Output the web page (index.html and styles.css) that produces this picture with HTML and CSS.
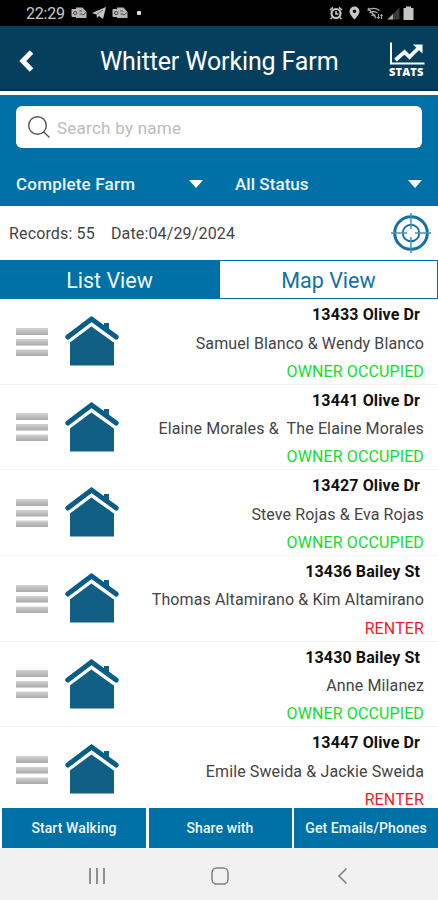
FILE: index.html
```html
<!DOCTYPE html>
<html lang="en">
<head>
    <meta charset="UTF-8">
    <title>Whitter Working Farm</title>
    <link rel="stylesheet" href="styles.css">
</head>
<body>
    <!-- shared icons -->
    <svg class="defs" width="0" height="0">
        <defs>
            <linearGradient id="bar" x1="0" y1="0" x2="0" y2="1">
                <stop offset="0" stop-color="#d2d2d2"/>
                <stop offset="1" stop-color="#aaaaaa"/>
            </linearGradient>
            <symbol id="menu" viewBox="0 0 34 30">
                <rect x="1" y="1" width="32" height="7" fill="url(#bar)"/>
                <rect x="1" y="12" width="32" height="6.5" fill="url(#bar)"/>
                <rect x="1" y="22.500" width="32" height="6.500" fill="url(#bar)"/>
            </symbol>
            <symbol id="house" viewBox="0 0 54 52">
                <path d="M5 24.500 L26.500 9 L49 25 V50.500 H5 Z" fill="#125f86"/>
                <path d="M39 8 H44 V17 L39 13 Z" fill="#125f86"/>
                <path d="M3 26.500 L26.500 9 L51 26.500" fill="none" stroke="#fff" stroke-width="4"/>
                <path d="M2.800 22 L26.500 4 L51.200 22" fill="none" stroke="#075c88" stroke-width="5" stroke-linecap="round"/>
            </symbol>
            <symbol id="mail" viewBox="0 0 16 12">
                <path d="M5 0.500 H11.500 L15.500 5 V11 H5 Z" fill="#b4b4b4"/>
                <rect x="0.500" y="2" width="7.500" height="8" rx="1" fill="#bbb"/>
                <circle cx="4.200" cy="6" r="1.700" fill="none" stroke="#444"/>
                <path d="M8.500 4 H11 M8.500 7 H10.500 L12 8 L15 5.500" fill="none" stroke="#444" stroke-width="0.900"/>
            </symbol>
        </defs>
    </svg>

    <div class="status-bar">
        <span class="time">22:29</span>
        <svg class="s-mail" width="16" height="12"><use href="#mail"/></svg>
        <svg class="s-plane" width="14" height="12" viewBox="0 0 14 12"><path d="M0 6 L14 0 L11 12 L7 9 L5 11 L4.500 7.500 Z" fill="#c4c4c4"/><path d="M4.500 7.500 L11 3" stroke="#444" stroke-width="0.700"/></svg>
        <svg class="s-mail" width="16" height="12"><use href="#mail"/></svg>
        <span class="dot"></span>
        <div class="system">
            <svg class="alarm" width="14" height="14" viewBox="0 0 14 14" fill="none" stroke="#c4c4c4"><circle cx="7" cy="7.500" r="4.500" stroke-width="2.200"/><path d="M7 5 V8 H9.500 M1 4 L4 1.300 M10 1.300 L13 4 M3 11.500 L1.500 13 M11 11.500 L12.500 13" stroke-width="1.600"/></svg>
            <svg class="pin" width="11" height="14" viewBox="0 0 11 14"><path fill="#c8c8c8" fill-rule="evenodd" d="M5.500 0.500 A5 5 0 0 1 10.500 5.500 C10.500 8.500 5.500 13.500 5.500 13.500 S0.500 8.500 0.500 5.500 A5 5 0 0 1 5.500 0.500 Z M5.500 3.500 A1.800 1.800 0 1 0 5.500 7.100 A1.800 1.800 0 1 0 5.500 3.500 Z"/></svg>
            <svg class="wifi" width="16" height="13" viewBox="0 0 16 13" fill="none" stroke="#aaa" stroke-width="1.300"><path d="M0.500 3.500 Q6.500 -0.800 12.500 3.500 M2.500 6 Q6.500 3 10.500 6 M4.500 8.500 Q6.500 7 8.500 8.500 M1 1 L9 11"/><path d="M11.500 7 V11.500 M10 10 L11.500 11.700 L13 10 M14.500 12 V7.500 M13.300 9 L14.500 7.500 L15.700 9" stroke-width="1"/></svg>
            <svg width="13" height="13" viewBox="0 0 13 13"><path d="M0.500 12.500 L12.500 0.500 V12.500 Z" fill="#3b3b3b"/><path d="M0.500 12.500 L6 7 V12.500 Z" fill="#aaa"/></svg>
            <svg class="battery" width="11" height="14" viewBox="0 0 11 14"><path d="M0.500 2 H3 V0.500 H8 V2 H10.500 V14 H0.500 Z" fill="#c4c4c4"/></svg>
        </div>
    </div>

    <div class="header">
        <svg class="back" width="16" height="22" viewBox="0 0 16 22"><path d="M12.500 2 L3.800 11 L12.500 20" fill="none" stroke="#fff" stroke-width="5"/></svg>
        <h1>Whitter Working Farm</h1>
        <div class="stats">
            <svg width="36" height="24" viewBox="0 0 36 24" fill="none" stroke="#fff"><path d="M2 0.500 V21.500 H35.500" stroke-width="2"/><path d="M6.500 18 L15.500 10 L20.500 15 L29.500 6" stroke-width="3.800"/><path d="M24 2.500 H33.500 V11.500 Z" fill="#fff" stroke="none"/></svg>
            <span>STATS</span>
        </div>
    </div>

    <div class="filters">
        <div class="search">
            <svg width="24" height="24" viewBox="0 0 24 24" fill="none" stroke="#555" stroke-width="1.400"><circle cx="10.500" cy="10.500" r="8.800"/><path d="M16.500 16.800 L22.500 22.500"/></svg>
            <span>Search by name</span>
        </div>
        <div class="selects">
            <div class="select"><span class="farm">Complete Farm</span><i class="caret"></i></div>
            <div class="select"><span class="state">All Status</span><i class="caret"></i></div>
        </div>
    </div>

    <div class="info">
        <span class="records">Records: 55</span>
        <span class="date">Date:04/29/2024</span>
        <svg class="target" width="42" height="42" viewBox="0 0 42 42" fill="none" stroke="#1271a5">
            <circle cx="21" cy="21" r="16.300" stroke-width="3"/>
            <circle cx="21" cy="21" r="8.300" stroke-width="1.900"/>
            <path d="M21 1 V17 M21 25 V41 M1 21 H17 M25 21 H41" stroke="#4c91b7" stroke-width="1.500"/>
        </svg>
    </div>

    <div class="tabs">
        <div class="tab active">List View</div>
        <div class="tab">Map View</div>
    </div>

    <div class="list" id="list"></div>

    <div class="actions">
        <div class="action">Start Walking</div>
        <div class="action">Share with</div>
        <div class="action">Get Emails/Phones</div>
    </div>

    <div class="nav">
        <svg width="18" height="18" viewBox="0 0 18 18" stroke="#808080" stroke-width="1.700"><path d="M2 1 V17 M9 1 V17 M16 1 V17"/></svg>
        <svg width="20" height="18" viewBox="0 0 20 18" fill="none" stroke="#808080" stroke-width="1.500"><rect x="2" y="1" width="16" height="16" rx="4.500"/></svg>
        <svg width="18" height="18" viewBox="0 0 18 18" fill="none" stroke="#808080" stroke-width="1.600"><path d="M12.500 1.500 L5 9 L12.500 16.500"/></svg>
    </div>

    <script>
        const records = [
            { address: "13433 Olive Dr", name: "Samuel Blanco & Wendy Blanco", renter: false },
            { address: "13441 Olive Dr", name: "Elaine Morales &  The Elaine Morales", renter: false },
            { address: "13427 Olive Dr", name: "Steve Rojas & Eva Rojas", renter: false },
            { address: "13436 Bailey St", name: "Thomas Altamirano & Kim Altamirano", renter: true },
            { address: "13430 Bailey St", name: "Anne Milanez", renter: false },
            { address: "13447 Olive Dr", name: "Emile Sweida & Jackie Sweida", renter: true }
        ];
        const list = document.getElementById("list");
        records.forEach(r => {
            list.innerHTML += `<div class="row">
                <svg class="menu" width="34" height="30"><use href="#menu"/></svg>
                <svg class="house" width="54" height="52"><use href="#house"/></svg>
                <div class="details">
                    <div class="address">${r.address}</div>
                    <div class="name">${r.name.replace("&", "&amp;")}</div>
                    <div class="${r.renter ? "renter" : "owner"}">${r.renter ? "RENTER" : "OWNER OCCUPIED"}</div>
                </div>
            </div>`.replace(/>\s+</g, "><");
        });
    </script>
</body>
</html>
```

FILE: styles.css
```css
* { box-sizing: border-box; }
body { margin: 0; width: 438px; height: 900px; overflow: hidden; display: flex; flex-direction: column; background: #fff; font-family: Roboto, "Liberation Sans", sans-serif; }
svg { display: block; flex: none; }
.defs { position: absolute; }

.status-bar { height: 26px; flex: none; background: #000; display: flex; align-items: center; padding: 0 24px 0 26px; color: #c8c8c8; }
.time { font-size: 16px; letter-spacing: -0.2px; width: 45px; line-height: 26px; padding-top: 1px; }
.s-plane { margin: 0 6px 0 5px; }
.dot { width: 4px; height: 4px; border-radius: 1px; background: #ddd; margin-left: 9px; }
.system { display: flex; align-items: center; margin-left: auto; }
.pin { margin: 0 7px 0 6px; }
.wifi { margin-right: 4px; }
.battery { margin-left: 3px; }

.header { height: 69px; flex: none; background: #063f5e; border-bottom: 4px solid #fff; box-shadow: inset 0 -2px #07335a; display: flex; align-items: center; padding: 0 13px 0 19px; color: #fff; }
.back { margin-top: 4px; }
h1 { margin: 7px 0 0 65px; font-size: 25px; font-weight: 400; line-height: 30px; letter-spacing: -0.13px; white-space: nowrap; }
.stats { margin-left: auto; padding-top: 3px; width: 36px; }
.stats span { display: block; font: bold 11px/12px "Open Sans", sans-serif; font-weight: 800; letter-spacing: 0.15px; }

.filters { height: 111px; flex: none; background: #0071a7; padding: 11px 16px 0; }
.search { height: 42px; background: #fff; border-radius: 6px; display: flex; align-items: center; padding-left: 11px; color: #bcbcbc; font-size: 17px; letter-spacing: 0.25px; }
.search span { margin-left: 6px; padding-top: 2px; }
.selects { display: grid; grid-template-columns: 219px 187px; height: 71px; align-items: center; color: #eef6fb; font-size: 17px; font-weight: 500; letter-spacing: 0.2px; }
.select { display: flex; align-items: center; justify-content: space-between; }
.select:first-child { padding-right: 32px; }
.state { letter-spacing: 0.05px; }
.caret { border: 7px solid transparent; border-top: 8px solid #fff; border-bottom: 0; }

.info { height: 54px; flex: none; display: flex; align-items: center; padding: 0 6px 0 9px; color: #444; font-size: 16px; letter-spacing: 0.15px; }
.info span { padding-top: 1px; }
.date { margin-left: 16px; }
.target { margin-left: auto; }

.tabs { height: 39px; flex: none; display: flex; }
.tab { flex: 1; border: 1px solid #0071a7; color: #1271a5; font-size: 21.5px; line-height: 40px; text-align: center; }
.tab.active { background: #0071a7; color: #f2f8fc; }

.list { height: 509px; flex: none; overflow: hidden; padding-top: 0.3px; }
.row { height: 85.6px; border-bottom: 1px solid #f4f4f4; display: flex; padding: 0 14px 0 15px; }
.menu { margin-top: 27.5px; }
.house { margin: 16px 0 0 16px; }
.details { flex: 1; padding-top: 2px; text-align: right; font-size: 16px; line-height: 28.3px; letter-spacing: 0.12px; white-space: pre; display: flex; flex-direction: column; }
.address { color: #111; font-weight: 700; padding-right: 4px; }
.name { color: #444; }
.owner { color: #14dc2c; }
.renter { color: #f01c24; }

.actions { height: 40px; flex: none; display: grid; grid-template-columns: 144px 143px 144px; gap: 2.5px; padding-left: 2px; }
.action { background: #0071a7; color: #f2f8fc; font-size: 14px; font-weight: 500; line-height: 41px; letter-spacing: 0.1px; text-align: center; white-space: nowrap; }

.nav { flex: 1; background: #f1f1f1; display: flex; justify-content: space-between; align-items: center; padding: 4px 86px 0 88px; }
```
